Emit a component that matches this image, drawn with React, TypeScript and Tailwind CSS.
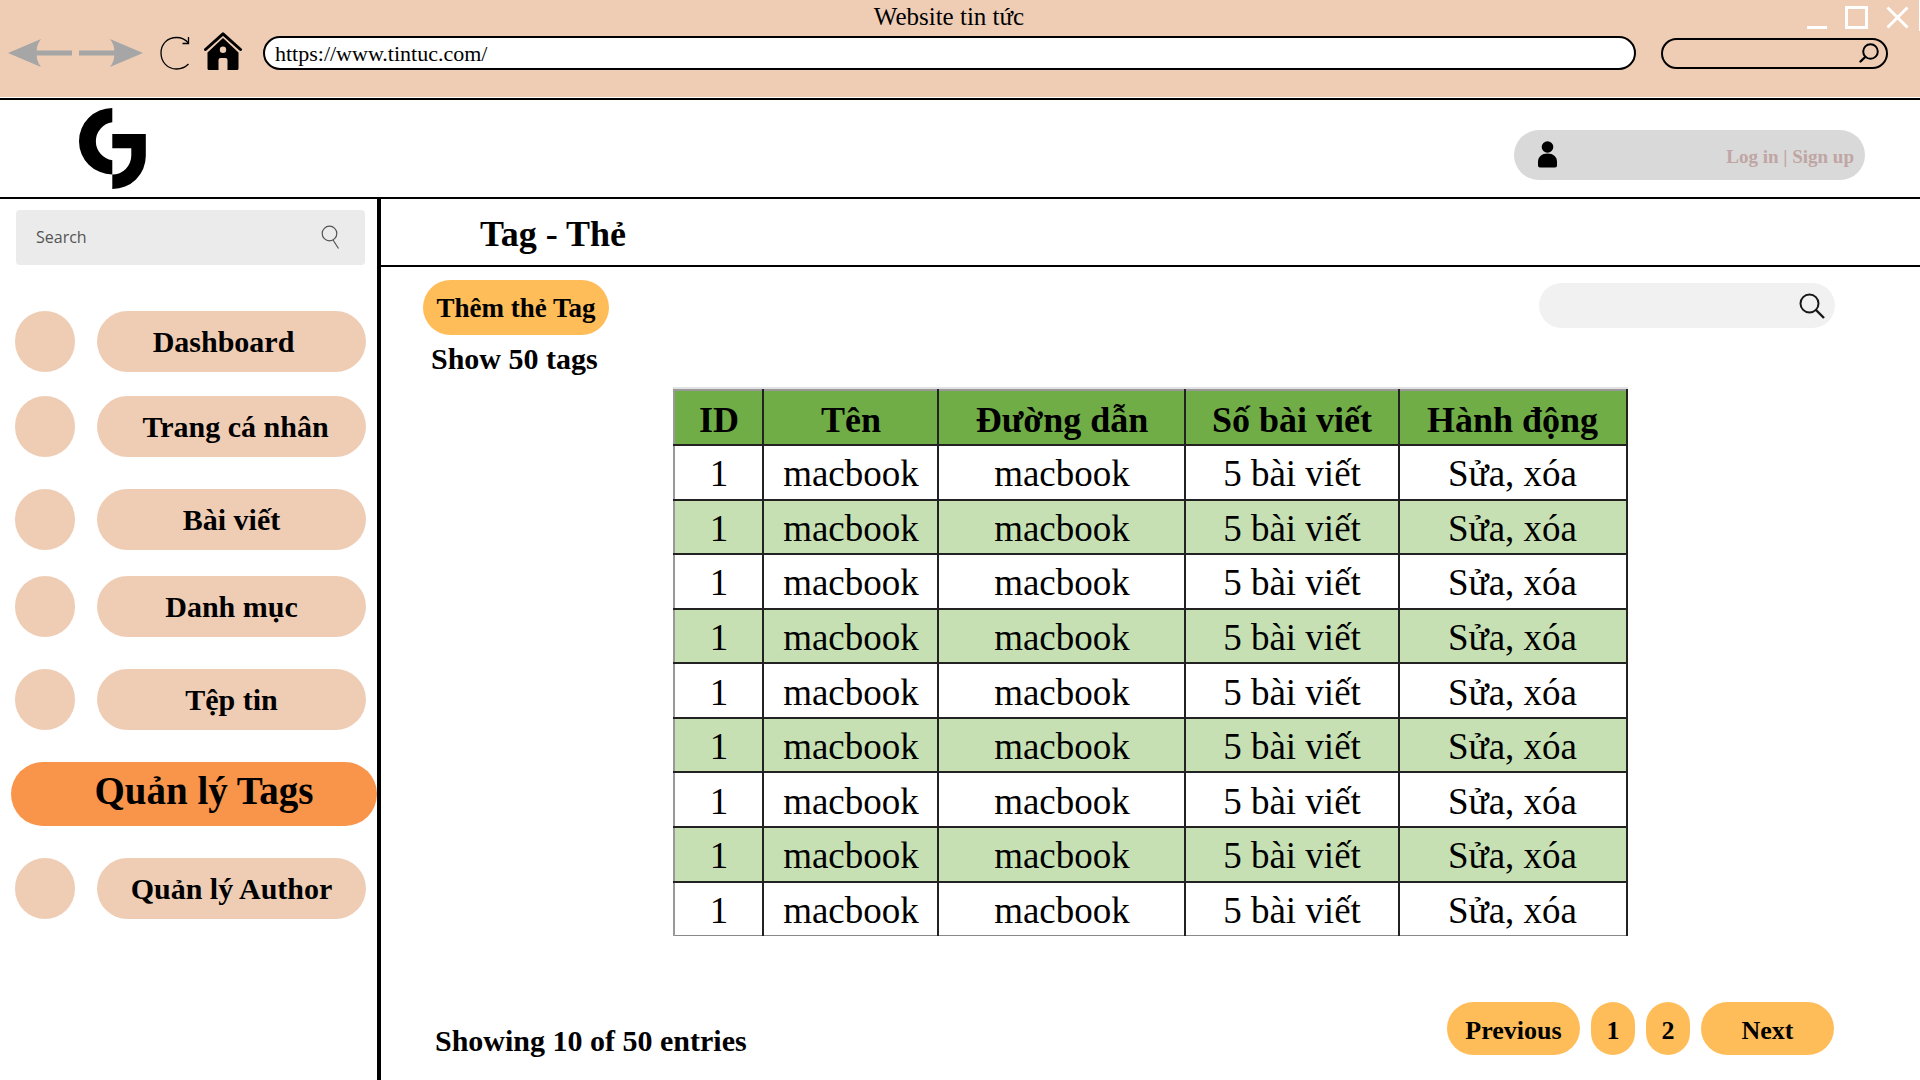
import React from "react";

type NavItem = { label: string; spacing: string; align?: string; active?: boolean };

const NAV: NavItem[] = [
  { label: "Dashboard", spacing: "mt-[46px]", align: "pr-4" },
  { label: "Trang cá nhân", spacing: "mt-6", align: "pl-2" },
  { label: "Bài viết", spacing: "mt-8" },
  { label: "Danh mục", spacing: "mt-[26px]" },
  { label: "Tệp tin", spacing: "mt-8" },
  { label: "Quản lý Tags", spacing: "mt-8", active: true },
  { label: "Quản lý Author", spacing: "mt-8" },
];

const COLUMNS = [
  { title: "ID", width: "w-[89px]" },
  { title: "Tên", width: "w-[175px]" },
  { title: "Đường dẫn", width: "w-[247px]" },
  { title: "Số bài viết", width: "w-[213px]" },
  { title: "Hành động", width: "w-[228px]" },
];

const ROWS = Array.from({ length: 9 }, () => ({
  id: "1",
  name: "macbook",
  path: "macbook",
  posts: "5 bài viết",
}));

function ArrowIcon({ flip }: { flip?: boolean }) {
  return (
    <svg viewBox="0 0 64 28" className={flip ? "h-7 w-16 rotate-180" : "h-7 w-16"} aria-hidden="true">
      <path d="M0 14 L33 0 Q28.500 6 28.800 11.500 H64 V16.500 H28.800 Q28.500 22 33 28 Z" fill="#a6a6a6" />
    </svg>
  );
}

function ReloadIcon() {
  return (
    <svg viewBox="0 0 30 34" className="h-[34px] w-[30px]" fill="none" stroke="#000" strokeWidth="1.300" aria-hidden="true">
      <path d="M28.500 28 C25 31.500 21 33 16.500 33 C7.500 33 1 26 1 17 C1 8 7.500 1.500 16.500 1.500 C21.500 1.500 25.500 3.500 28.500 7" />
      <path d="M28.500 1 V7.500 H22.500" />
    </svg>
  );
}

function HomeIcon() {
  return (
    <svg viewBox="0 0 38 42" className="h-[42px] w-[38px]" aria-hidden="true">
      <path d="M1.500 17.500 L19 1.800 L36.500 17.500" fill="none" stroke="#000" strokeWidth="3" strokeLinejoin="round" strokeLinecap="round" />
      <path
        fillRule="evenodd"
        d="M19 6 L34.500 20.500 V36.500 Q34.500 38 33 38 H23.500 V28 Q23.500 26 21.500 26 H16.500 Q14.500 26 14.500 28 V38 H5 Q3.500 38 3.500 36.500 V20.500 Z M19 14.500 A3.200 3.200 0 1 0 19 20.900 A3.200 3.200 0 1 0 19 14.500 Z"
      />
    </svg>
  );
}

function Logo() {
  return (
    <svg viewBox="0 0 67 81" className="h-[81px] w-[67px]" role="img" aria-label="G">
      <path d="M33.300 0 V14.200 A19.200 19.200 0 0 0 33.300 52.200 V66.400 A33.300 33.200 0 0 1 33.300 0 Z" />
      <path d="M33.300 26 H66.800 V48 A33.300 33 0 0 1 33.300 81 V66.600 A19 19 0 0 0 52.300 47.600 V40.300 H33.300 Z" />
    </svg>
  );
}

function BrowserChrome() {
  return (
    <div className="bg-[#efcdb5] pb-[22px]">
      <div className="flex h-[31px] items-center border-r border-white pl-[91px] pr-[10px]">
        <div className="flex-1 pt-[3px] text-center text-[25px] leading-7">Website tin tức</div>
        <div className="flex h-[26px] items-end gap-[18px]">
          <button aria-label="Minimize" className="flex h-6 w-5 items-end">
            <span className="h-[3px] w-5 bg-white" />
          </button>
          <button aria-label="Maximize" className="h-[23px] w-[23px] border-[3px] border-white" />
          <button aria-label="Close" className="h-[23px] w-[23px]">
            <svg viewBox="0 0 23 23" className="h-[23px] w-[23px]" stroke="#fff" strokeWidth="3" aria-hidden="true">
              <path d="M1.500 1.500 L21.500 21.500 M21.500 1.500 L1.500 21.500" />
            </svg>
          </button>
        </div>
      </div>
      <div className="flex h-11 items-center pl-2 pr-8">
        <button aria-label="Back">
          <ArrowIcon />
        </button>
        <button aria-label="Forward" className="ml-[7px]">
          <ArrowIcon flip />
        </button>
        <button aria-label="Reload" className="ml-[17px]">
          <ReloadIcon />
        </button>
        <button aria-label="Home" className="ml-3.5">
          <HomeIcon />
        </button>
        <input
          aria-label="Address"
          defaultValue="https://www.tintuc.com/"
          className="ml-[21px] h-[34px] min-w-0 flex-1 rounded-full border-2 border-black bg-white px-[10px] pt-0.5 text-[22px] outline-none"
        />
        <label className="ml-[25px] flex h-[31px] w-[227px] items-center rounded-full border-2 border-black pl-3 pr-[7px]">
          <input aria-label="Browser search" className="min-w-0 flex-1 bg-transparent text-lg outline-none" />
          <svg viewBox="0 0 20 20" className="h-5 w-5" fill="none" stroke="#000" strokeWidth="2" strokeLinecap="round" aria-hidden="true">
            <circle cx="11.500" cy="8.500" r="7.300" />
            <path d="M6.200 14 L1.500 18.500" strokeWidth="2.400" />
          </svg>
        </label>
      </div>
    </div>
  );
}

function Header() {
  return (
    <header className="mt-px flex h-[101px] items-center justify-between border-y-2 border-black pl-[79px] pr-[55px]">
      <Logo />
      <div className="mt-3 flex h-[50px] w-[351px] items-center justify-between rounded-full bg-[#d9d9d9] pl-6 pr-[11px]">
        <svg viewBox="0 0 19 27" className="h-[27px] w-[19px]" aria-hidden="true">
          <circle cx="9.500" cy="6" r="5.800" />
          <path d="M0 21 C0 15.500 4 12.500 9.500 12.500 C15 12.500 19 15.500 19 21 V24.500 Q19 26.500 17 26.500 H2 Q0 26.500 0 24.500 Z" />
        </svg>
        <div className="pt-1.5 text-[19px] font-bold text-[#bfa6a4]">
          <a href="#login">Log in</a> | <a href="#signup">Sign up</a>
        </div>
      </div>
    </header>
  );
}

function Sidebar() {
  return (
    <aside className="w-[381px] shrink-0 border-r-4 border-black pt-[11px]">
      <label className="ml-4 mr-3 flex h-[55px] items-center rounded bg-[#ebebeb] pb-0.5 pl-5 pr-[25px]">
        <input
          aria-label="Search"
          placeholder="Search"
          className="min-w-0 flex-1 bg-transparent font-['Open_Sans',sans-serif] text-base text-[#545454] outline-none placeholder:text-[#545454]"
        />
        <svg viewBox="0 0 20 24" className="h-6 w-5" fill="none" stroke="#545454" strokeWidth="1.200" aria-hidden="true">
          <circle cx="9.500" cy="8.500" r="7.300" />
          <path d="M13 15 L18.500 23.500" />
        </svg>
      </label>
      <nav>
        {NAV.map((item) =>
          item.active ? (
            <a
              key={item.label}
              href="#tags"
              aria-current="page"
              className={`ml-[11px] flex h-16 items-center justify-center rounded-full bg-[#f9944b] pb-2 pl-5 text-[39px] font-bold leading-none ${item.spacing}`}
            >
              {item.label}
            </a>
          ) : (
            <a key={item.label} href="#section" className={`ml-[15px] mr-[11px] flex gap-[22px] ${item.spacing}`}>
              <span className="h-[61px] w-[60px] shrink-0 rounded-full bg-[#efcdb5]" />
              <span
                className={`flex h-[61px] flex-1 items-center justify-center rounded-full bg-[#efcdb5] text-[30px] font-bold leading-9 ${item.align ?? ""}`}
              >
                {item.label}
              </span>
            </a>
          ),
        )}
      </nav>
    </aside>
  );
}

function TagTable() {
  return (
    <div className="mx-auto mt-[10px] w-[62%] border-t-2 border-[#e2e2e2]">
      <table className="h-[547px] w-full table-fixed border-collapse text-center text-[37px] leading-[40px]">
        <thead>
          <tr className="h-[55px] bg-[#70ad47]">
            {COLUMNS.map((c) => (
              <th
                key={c.title}
                scope="col"
                className={`border-b-2 border-r-2 border-t-2 border-[#222] border-t-[#999] p-0 pt-1 text-[36px] font-bold first:border-l-2 first:border-l-[#999] ${c.width}`}
              >
                {c.title}
              </th>
            ))}
          </tr>
        </thead>
        <tbody>
          {ROWS.map((r, i) => (
            <tr
              key={i}
              className="even:bg-[#c6e0b4] [&>td]:border-b-2 [&>td]:border-r-2 [&>td]:border-[#222] [&>td]:p-0 [&>td]:pt-1 [&>td:first-child]:border-l-2 [&>td:first-child]:border-l-[#999] last:[&>td]:border-b last:[&>td]:border-b-[#888]"
            >
              <td>{r.id}</td>
              <td>{r.name}</td>
              <td>{r.path}</td>
              <td>{r.posts}</td>
              <td>
                <a href="#edit">Sửa</a>, <a href="#delete">xóa</a>
              </td>
            </tr>
          ))}
        </tbody>
      </table>
    </div>
  );
}

function Pagination() {
  const base = "h-[53px] rounded-full bg-[#ffbd59] pt-1 text-[26px] font-bold";
  return (
    <nav aria-label="Pages" className="flex gap-[11px]">
      <button className={`${base} w-[133px]`}>Previous</button>
      <button className={`${base} w-11`}>1</button>
      <button className={`${base} w-11`}>2</button>
      <button className={`${base} w-[133px]`}>Next</button>
    </nav>
  );
}

export default function App() {
  return (
    <div className="flex min-h-screen flex-col bg-white font-['Liberation_Serif',serif] text-black">
      <BrowserChrome />
      <Header />
      <div className="flex flex-1">
        <Sidebar />
        <main className="min-w-0 flex-1">
          <h1 className="flex h-[68px] items-center border-b-2 border-black pl-[99px] pt-1 text-[36px] font-bold">
            Tag - Thẻ
          </h1>
          <div className="flex items-start justify-between pl-[42px] pr-[85px] pt-[13px]">
            <button className="h-[55px] w-[186px] whitespace-nowrap rounded-full bg-[#ffbd59] pt-0.5 text-[27px] font-bold">
              Thêm thẻ Tag
            </button>
            <label className="mt-[3px] flex h-[45px] w-[296px] items-center rounded-full bg-[#f1f1f1] pl-4 pr-[10px]">
              <input aria-label="Search tags" className="min-w-0 flex-1 bg-transparent text-xl outline-none" />
              <svg viewBox="0 0 26 26" className="h-[26px] w-[26px]" fill="none" stroke="#171717" strokeWidth="2" aria-hidden="true">
                <circle cx="10.500" cy="10.500" r="9" />
                <path d="M17 17 L25 25" strokeWidth="2.400" />
              </svg>
            </label>
          </div>
          <p className="mt-1.5 pl-[50px] text-[30px] font-bold leading-9">Show 50 tags</p>
          <TagTable />
          <div className="mt-[66px] flex items-start justify-between pl-[54px] pr-[86px]">
            <p className="pt-[21px] text-[30px] font-bold leading-9">Showing 10 of 50 entries</p>
            <Pagination />
          </div>
        </main>
      </div>
    </div>
  );
}
